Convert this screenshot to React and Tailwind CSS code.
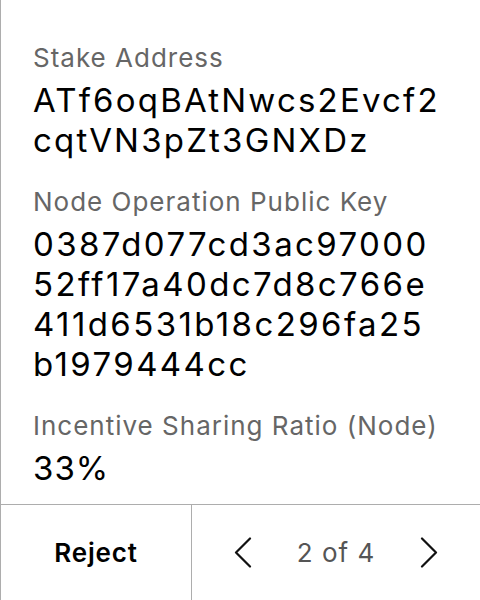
const fields = [
  {
    label: "Stake Address",
    lines: ["ATf6oqBAtNwcs2Evcf2", "cqtVN3pZt3GNXDz"],
    valueClass: "tracking-[2.2px]",
  },
  {
    label: "Node Operation Public Key",
    lines: ["0387d077cd3ac97000", "52ff17a40dc7d8c766e", "411d6531b18c296fa25", "b1979444cc"],
    valueClass: "tracking-[2.4px]",
  },
  { label: "Incentive Sharing Ratio (Node)", lines: ["33%"], valueClass: "tracking-[1px]" },
];

const Chevron = ({ dir }) => (
  <svg width="18" height="31" viewBox="0 0 18 31" fill="none">
    <path
      d={dir === "left" ? "M16 1.5 L2 15.5 L16 29.5" : "M2 1.5 L16 15.5 L2 29.5"}
      stroke="#111"
      strokeWidth="2.2"
      strokeLinecap="round"
      strokeLinejoin="round"
    />
  </svg>
);

export default function App() {
  return (
    <div className="w-[480px] h-[600px] bg-white flex flex-col border-l border-[#adadad] font-['Inter',sans-serif]">
      <div className="flex-1 pl-[32px] pr-[20px] pt-[42px] flex flex-col gap-[26px]">
        {fields.map((f) => (
          <div key={f.label} className="flex flex-col gap-[6px]">
            <p className="text-[26px] leading-[32px] tracking-[1px] text-[#666]">{f.label}</p>
            <p className={`text-[33px] leading-[40px] text-black ${f.valueClass}`}>
              {f.lines.map((l) => (
                <span key={l} className="block">{l}</span>
              ))}
            </p>
          </div>
        ))}
      </div>

      <div className="h-[96px] border-t border-[#adadad] flex">
        <button className="w-[191px] border-r border-[#adadad] flex items-center justify-center text-[26px] tracking-[0.8px] font-semibold text-black">
          Reject
        </button>
        <div className="flex-1 flex items-center justify-between px-[42px]">
          <Chevron dir="left" />
          <span className="text-[26px] tracking-[1px] text-[#555]">2 of 4</span>
          <Chevron dir="right" />
        </div>
      </div>
    </div>
  );
}
